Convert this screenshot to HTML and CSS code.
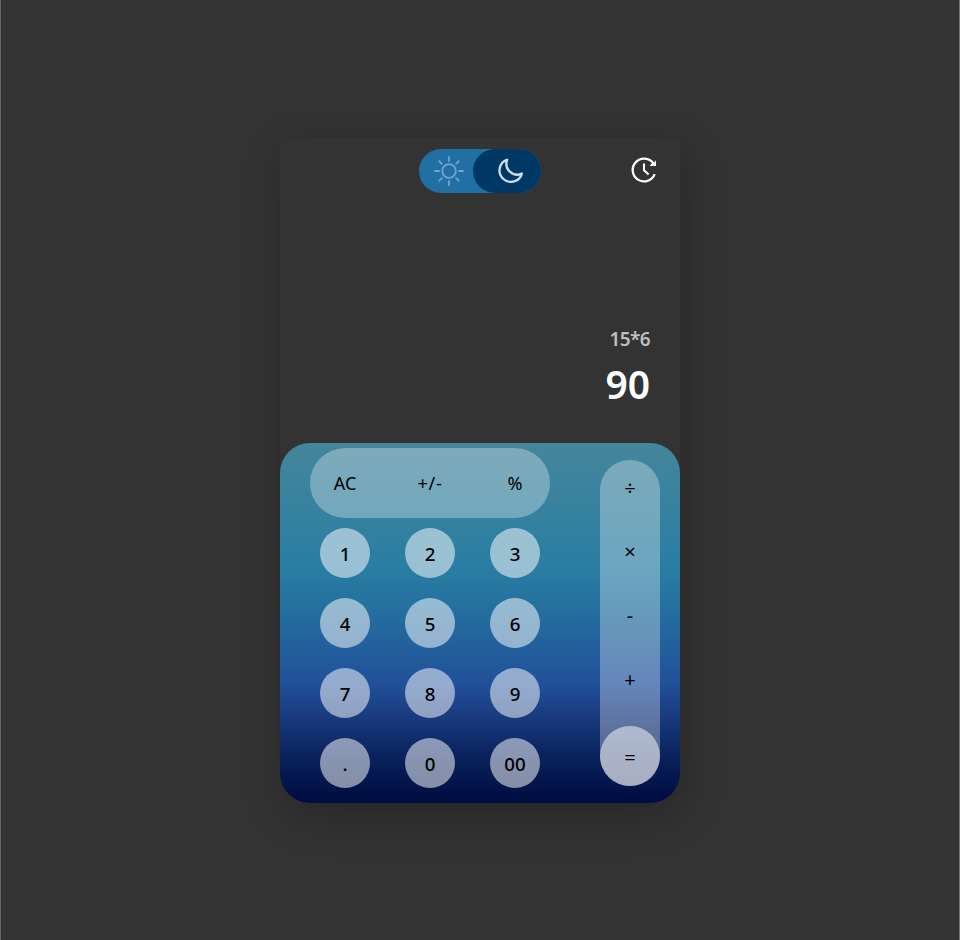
FILE: index.html
```html
<!DOCTYPE html>
<html lang="en">
<head>
<meta charset="utf-8">
<title>Calculator</title>
<link rel="stylesheet" href="styles.css">
</head>
<body>
<main class="calculator">
  <header class="topbar">
    <div class="theme">
      <span class="sun">
        <svg width="30" height="30" viewBox="0 0 30 30" fill="none" stroke="currentColor" stroke-width="1.8" stroke-linecap="round"><circle cx="15" cy="15" r="6.8"/><path d="M15 1v4M15 25v4M1 15h4M25 15h4M5.2 5.2l2.7 2.7M22.1 22.1l2.7 2.7M5.2 24.8l2.7-2.7M22.1 7.9l2.7-2.7"/></svg>
      </span>
      <span class="moon">
        <svg width="26" height="26" viewBox="0 0 26 26" fill="none" stroke="currentColor" stroke-width="2.3" stroke-linejoin="round"><path d="M10.2 1.7A11.4 11.4 0 1 0 24.9 15.6A10.9 10.9 0 0 1 10.2 1.7Z"/></svg>
      </span>
    </div>
    <svg class="history" width="28" height="28" viewBox="0 0 28 28" fill="none" stroke="#fff" stroke-width="2.3"><path d="M23.4 7.4A11.4 11.4 0 1 0 24.7 18.2"/><path d="M14 7.5V14.3L18.6 18.6" stroke-width="2.1"/><path d="M26 4.2V9.9H19.6L22.6 6.6L24 6.4Z" fill="#fff" stroke="none"/></svg>
  </header>
  <section class="display">
    <div class="expression">15*6</div>
    <div class="result">90</div>
  </section>
  <section class="keypad">
    <div class="left">
      <div class="functions"><button>AC</button><button>+/-</button><button>%</button></div>
      <div class="numbers">
        <button>1</button><button>2</button><button>3</button>
        <button>4</button><button>5</button><button>6</button>
        <button>7</button><button>8</button><button>9</button>
        <button>.</button><button>0</button><button>00</button>
      </div>
    </div>
    <div class="operators">
      <button>÷</button><button>×</button><button>-</button><button>+</button><button class="equals">=</button>
    </div>
  </section>
</main>
</body>
</html>
```
FILE: styles.css
```css
* { box-sizing: border-box; }
body {
  margin: 0;
  height: 940px;
  padding-top: 138px;
  background: #333;
  border-left: 1px solid #666;
  border-right: 1px solid #777;
  font-family: "Noto Sans", "Open Sans", sans-serif;
}
.calculator {
  width: 400px;
  height: 665px;
  margin: 0 auto;
  display: flex;
  flex-direction: column;
  border-radius: 0 0 30px 30px;
  background: #333;
  box-shadow: 4px 14px 40px rgba(0, 0, 0, 0.22);
}
.topbar {
  display: grid;
  grid-template-columns: 1fr 122px 1fr;
  padding-top: 11px;
}
.theme {
  grid-column: 2;
  display: flex;
  height: 44px;
  border-radius: 22px;
  background: #226fa4;
}
.sun, .moon { display: flex; align-items: center; }
.sun { width: 54px; padding-left: 15px; color: #70a6c9; }
.moon {
  width: 68px;
  padding: 0 0 1px 24px;
  border-radius: 22px;
  background: #003865;
  color: #cbdcea;
}
.history { justify-self: end; margin: 7px 22px 0 0; }
.display {
  flex: 1;
  display: flex;
  flex-direction: column;
  align-items: flex-end;
  justify-content: flex-end;
  padding: 0 30px 34px 0;
  font-weight: 600;
}
.expression { font-size: 19px; line-height: 26px; letter-spacing: -0.6px; color: #bebebe; }
.result { font-size: 39px; line-height: 50px; color: #fff; margin-top: 7px; }
.keypad {
  height: 360px;
  display: flex;
  justify-content: space-between;
  padding: 5px 20px 15px 30px;
  border-radius: 30px;
  background: linear-gradient(#44869b 0%, #2a7ea3 34%, #24719f 45%, #21509a 67%, #18387b 77%, #08205a 88%, #000f43 98%);
}
button {
  padding: 0;
  border: 0;
  background: none;
  color: #000;
  font: 500 18.7px/1 "Noto Sans", "Open Sans", sans-serif;
}
.left { width: 240px; }
.functions {
  height: 70px;
  display: grid;
  grid-template-columns: repeat(3, 50px);
  column-gap: 35px;
  padding: 0 10px;
  border-radius: 35px;
  background: rgba(255, 255, 255, 0.31);
}
.functions button { padding-bottom: 1px; font-size: 18px; font-weight: 400; }
.functions button:nth-child(2) { letter-spacing: 0.8px; }
.numbers {
  display: grid;
  grid-template-columns: repeat(3, 50px);
  grid-auto-rows: 50px;
  gap: 20px 35px;
  padding: 10px;
}
.numbers button { padding-top: 2px; border-radius: 50%; background: rgba(255, 255, 255, 0.52); }
.operators {
  width: 60px;
  height: 326px;
  margin-top: 12px;
  display: flex;
  flex-direction: column;
  border-radius: 30px;
  background: rgba(255, 255, 255, 0.31);
}
.operators button { height: 64px; font-size: 20px; font-weight: 400; }
.operators button:first-child { height: 60px; padding-bottom: 5px; }
.operators .equals {
  height: 60px;
  margin-top: auto;
  padding: 3px 0 0;
  border-radius: 50%;
  background: rgba(255, 255, 255, 0.5);
}
```
